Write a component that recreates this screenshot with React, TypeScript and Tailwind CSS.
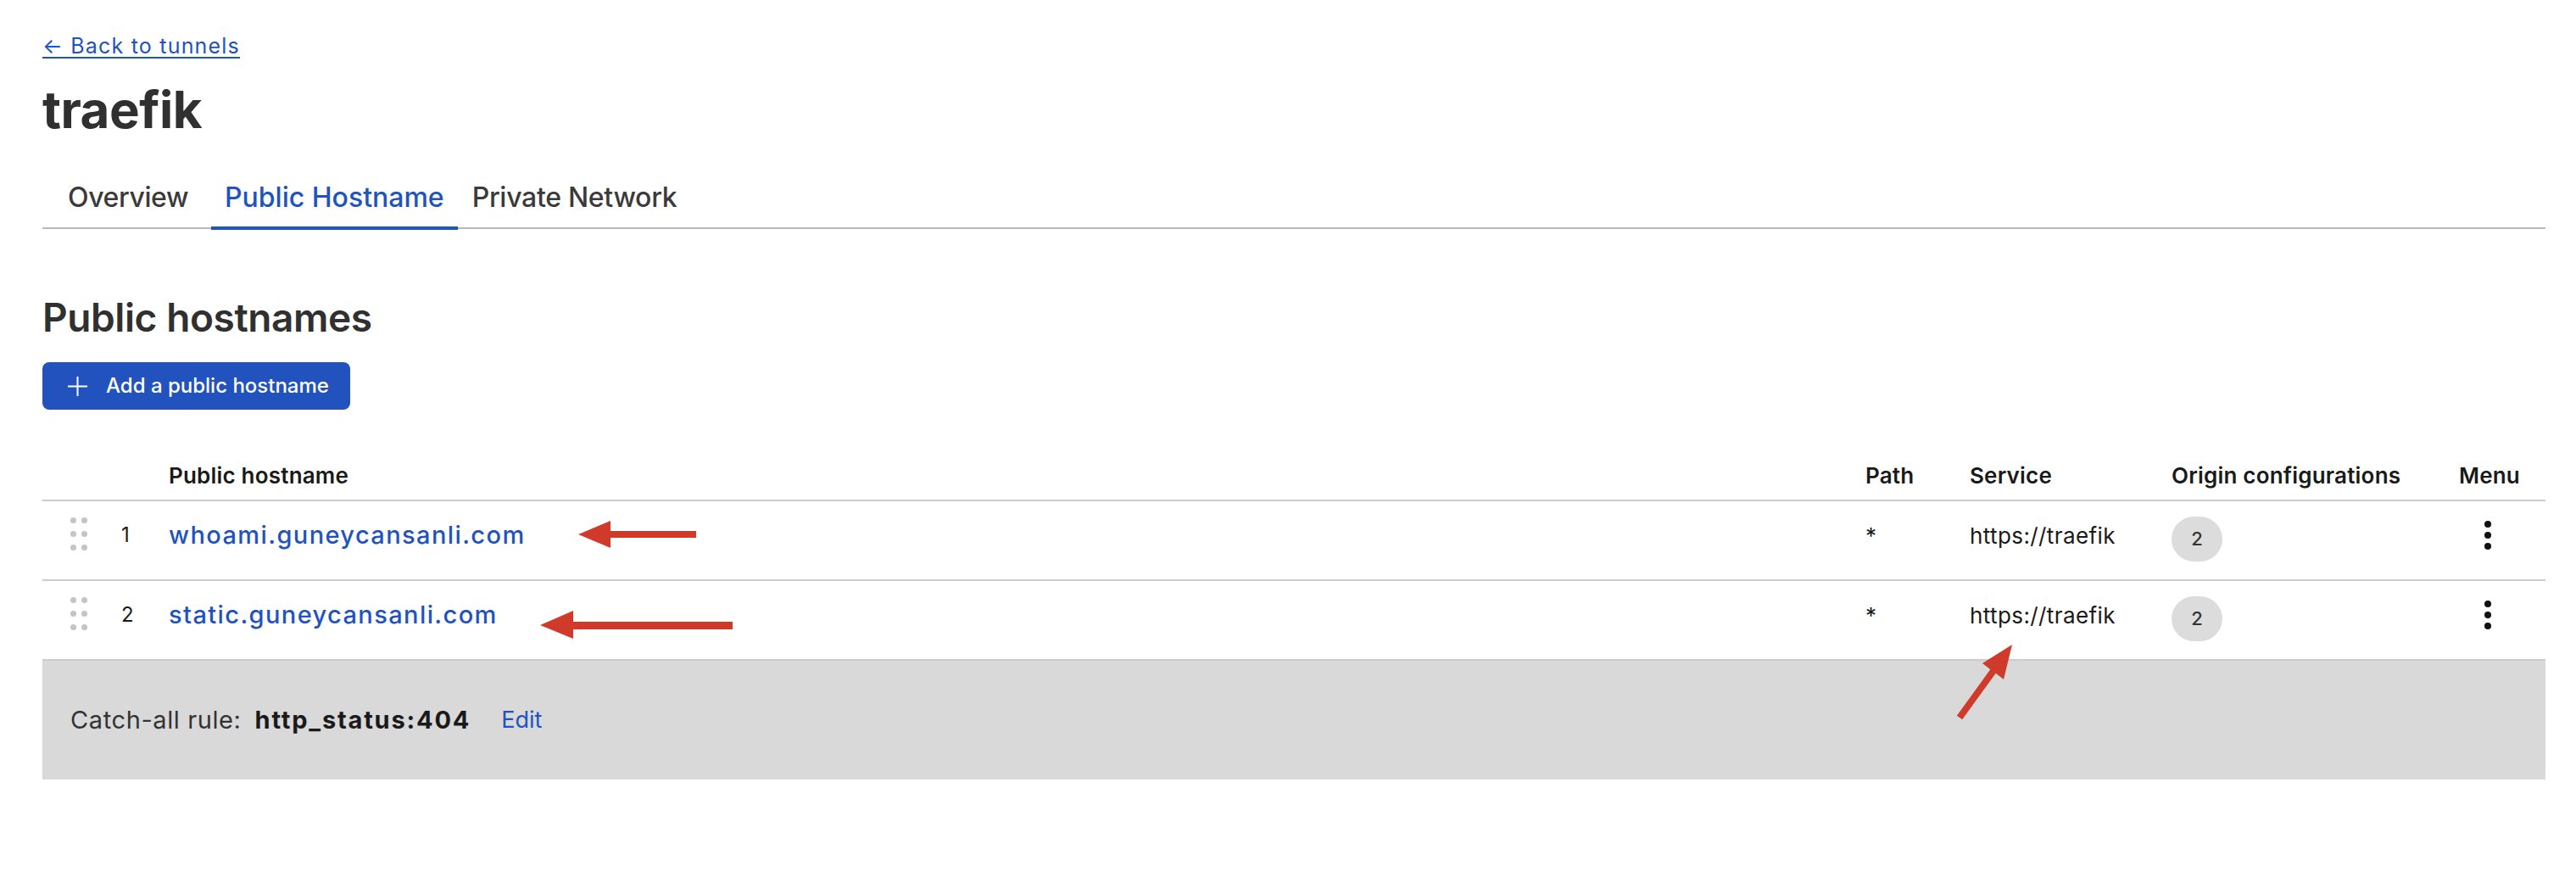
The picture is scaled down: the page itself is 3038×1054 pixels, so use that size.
import React from "react";

const cols = "grid grid-cols-[60px_56px_1fr_123px_238px_339px_102px] pl-[33px]";

const rows = [
  { n: 1, host: "whoami.guneycansanli.com", path: "*", service: "https://traefik", origins: 2 },
  { n: 2, host: "static.guneycansanli.com", path: "*", service: "https://traefik", origins: 2 },
];

function DragHandle() {
  return (
    <svg width="20" height="39" viewBox="0 0 20 39" className="mt-[-4px]">
      {[3.5, 19.5, 35.5].map((y) =>
        [3.5, 16.5].map((x) => <circle key={`${x}-${y}`} cx={x} cy={y} r="3.5" fill="#c4c4c4" />)
      )}
    </svg>
  );
}

function Kebab() {
  return (
    <svg width="8" height="34" viewBox="0 0 8 34">
      <circle cx="4" cy="4" r="4" fill="#111" />
      <circle cx="4" cy="17" r="4" fill="#111" />
      <circle cx="4" cy="30" r="4" fill="#111" />
    </svg>
  );
}

// red annotation arrows drawn over the table
function Annotations() {
  return (
    <svg
      className="absolute left-0 top-0 pointer-events-none"
      width="3038"
      height="1054"
      viewBox="0 0 3038 1054"
    >
      <polygon
        fill="#cf3a2a"
        points="682,630 720,614 720,626 821,626 821,634 720,634 720,646"
      />
      <polygon
        fill="#cf3a2a"
        points="637,737 676,720 676,733 864,733 864,742 676,742 676,753"
      />
      <polygon
        fill="#cf3a2a"
        points="2373,760 2338,782 2347.3,789.2 2307.8,843.7 2314.2,848.3 2353.7,793.8 2363,801"
      />
    </svg>
  );
}

export default function App() {
  return (
    <div className="relative min-h-[1054px] bg-white pl-[50px] pr-[36px] pt-[38px] font-['Inter',sans-serif] text-[#303030]">
      <a href="#" className="block w-fit text-[25px] leading-[32px] tracking-[1.2px] text-[#2153c0] underline underline-offset-[4px] decoration-[2px]">
        ← Back to tunnels
      </a>

      <h1 className="mt-[24px] text-[60px] leading-[70px] font-bold tracking-[-0.5px] text-[#303030]">traefik</h1>

      <div className="mt-[49px] flex border-b-2 border-[#b8b8b8]">
        <button className="ml-[13px] mr-[8px] -mb-[3px] border-b-4 border-transparent px-[17px] pb-[14px] text-[32px] leading-[40px] font-medium tracking-[-0.4px] text-[#3a3a3a]">
          Overview
        </button>
        <button className="ml-[2px] -mb-[3px] border-b-4 border-[#2153c0] px-[16px] pb-[14px] text-[32px] leading-[40px] font-medium text-[#2153c0]">
          Public Hostname
        </button>
        <button className="-mb-[3px] border-b-4 border-transparent px-[17px] pb-[14px] text-[32px] leading-[40px] font-medium tracking-[-0.3px] text-[#3a3a3a]">
          Private Network
        </button>
      </div>

      <h2 className="mt-[76px] text-[46px] leading-[56px] font-semibold tracking-[-0.4px] text-[#303030]">Public hostnames</h2>

      <button className="mt-[25px] flex h-[56px] w-[363px] items-center gap-[22px] rounded-[8px] bg-[#2152be] pl-[30px] text-[24px] font-medium text-white">
        <svg width="23" height="23" viewBox="0 0 23 23">
          <path d="M11.5 0v23M0 11.5h23" stroke="white" strokeWidth="2" />
        </svg>
        Add a public hostname
      </button>

      <div className="mt-[49px]">
        <div className={`${cols} h-[59px] items-center border-b-2 border-[#cccccc] text-[26px] font-semibold tracking-[0.2px] text-[#1a1a1a]`}>
          <div />
          <div />
          <div>Public hostname</div>
          <div>Path</div>
          <div>Service</div>
          <div>Origin configurations</div>
          <div>Menu</div>
        </div>

        {rows.map((r) => (
          <div
            key={r.n}
            className={`${cols} h-[94px] items-center border-b-2 border-[#cccccc] pb-[12px]`}
          >
            <div className="flex">
              <DragHandle />
            </div>
            <div className="text-[24px] text-[#1a1a1a]">{r.n}</div>
            <a href="#" className="w-fit text-[29px] font-medium tracking-[1.4px] text-[#2153c0]">
              {r.host}
            </a>
            <div className="text-[26px] text-[#1a1a1a]">{r.path}</div>
            <div className="text-[26px] tracking-[0.4px] text-[#1a1a1a]">{r.service}</div>
            <div className="mt-[9px]">
              <span className="flex h-[53px] w-[60px] items-center justify-center rounded-full bg-[#dcdcdc] text-[22px] font-medium text-[#333]">
                {r.origins}
              </span>
            </div>
            <div className="flex pl-[30px]">
              <Kebab />
            </div>
          </div>
        ))}

        <div className="flex h-[140px] items-center bg-[#d9d9d9] pl-[33px] text-[29px]">
          <span className="tracking-[0.6px] text-[#333]">Catch-all rule:</span>
          <span className="ml-[16px] font-bold tracking-[1.8px] text-[#1a1a1a]">http_status:404</span>
          <a href="#" className="ml-[36px] text-[27px] text-[#2153c0]">Edit</a>
        </div>
      </div>

      <Annotations />
    </div>
  );
}
